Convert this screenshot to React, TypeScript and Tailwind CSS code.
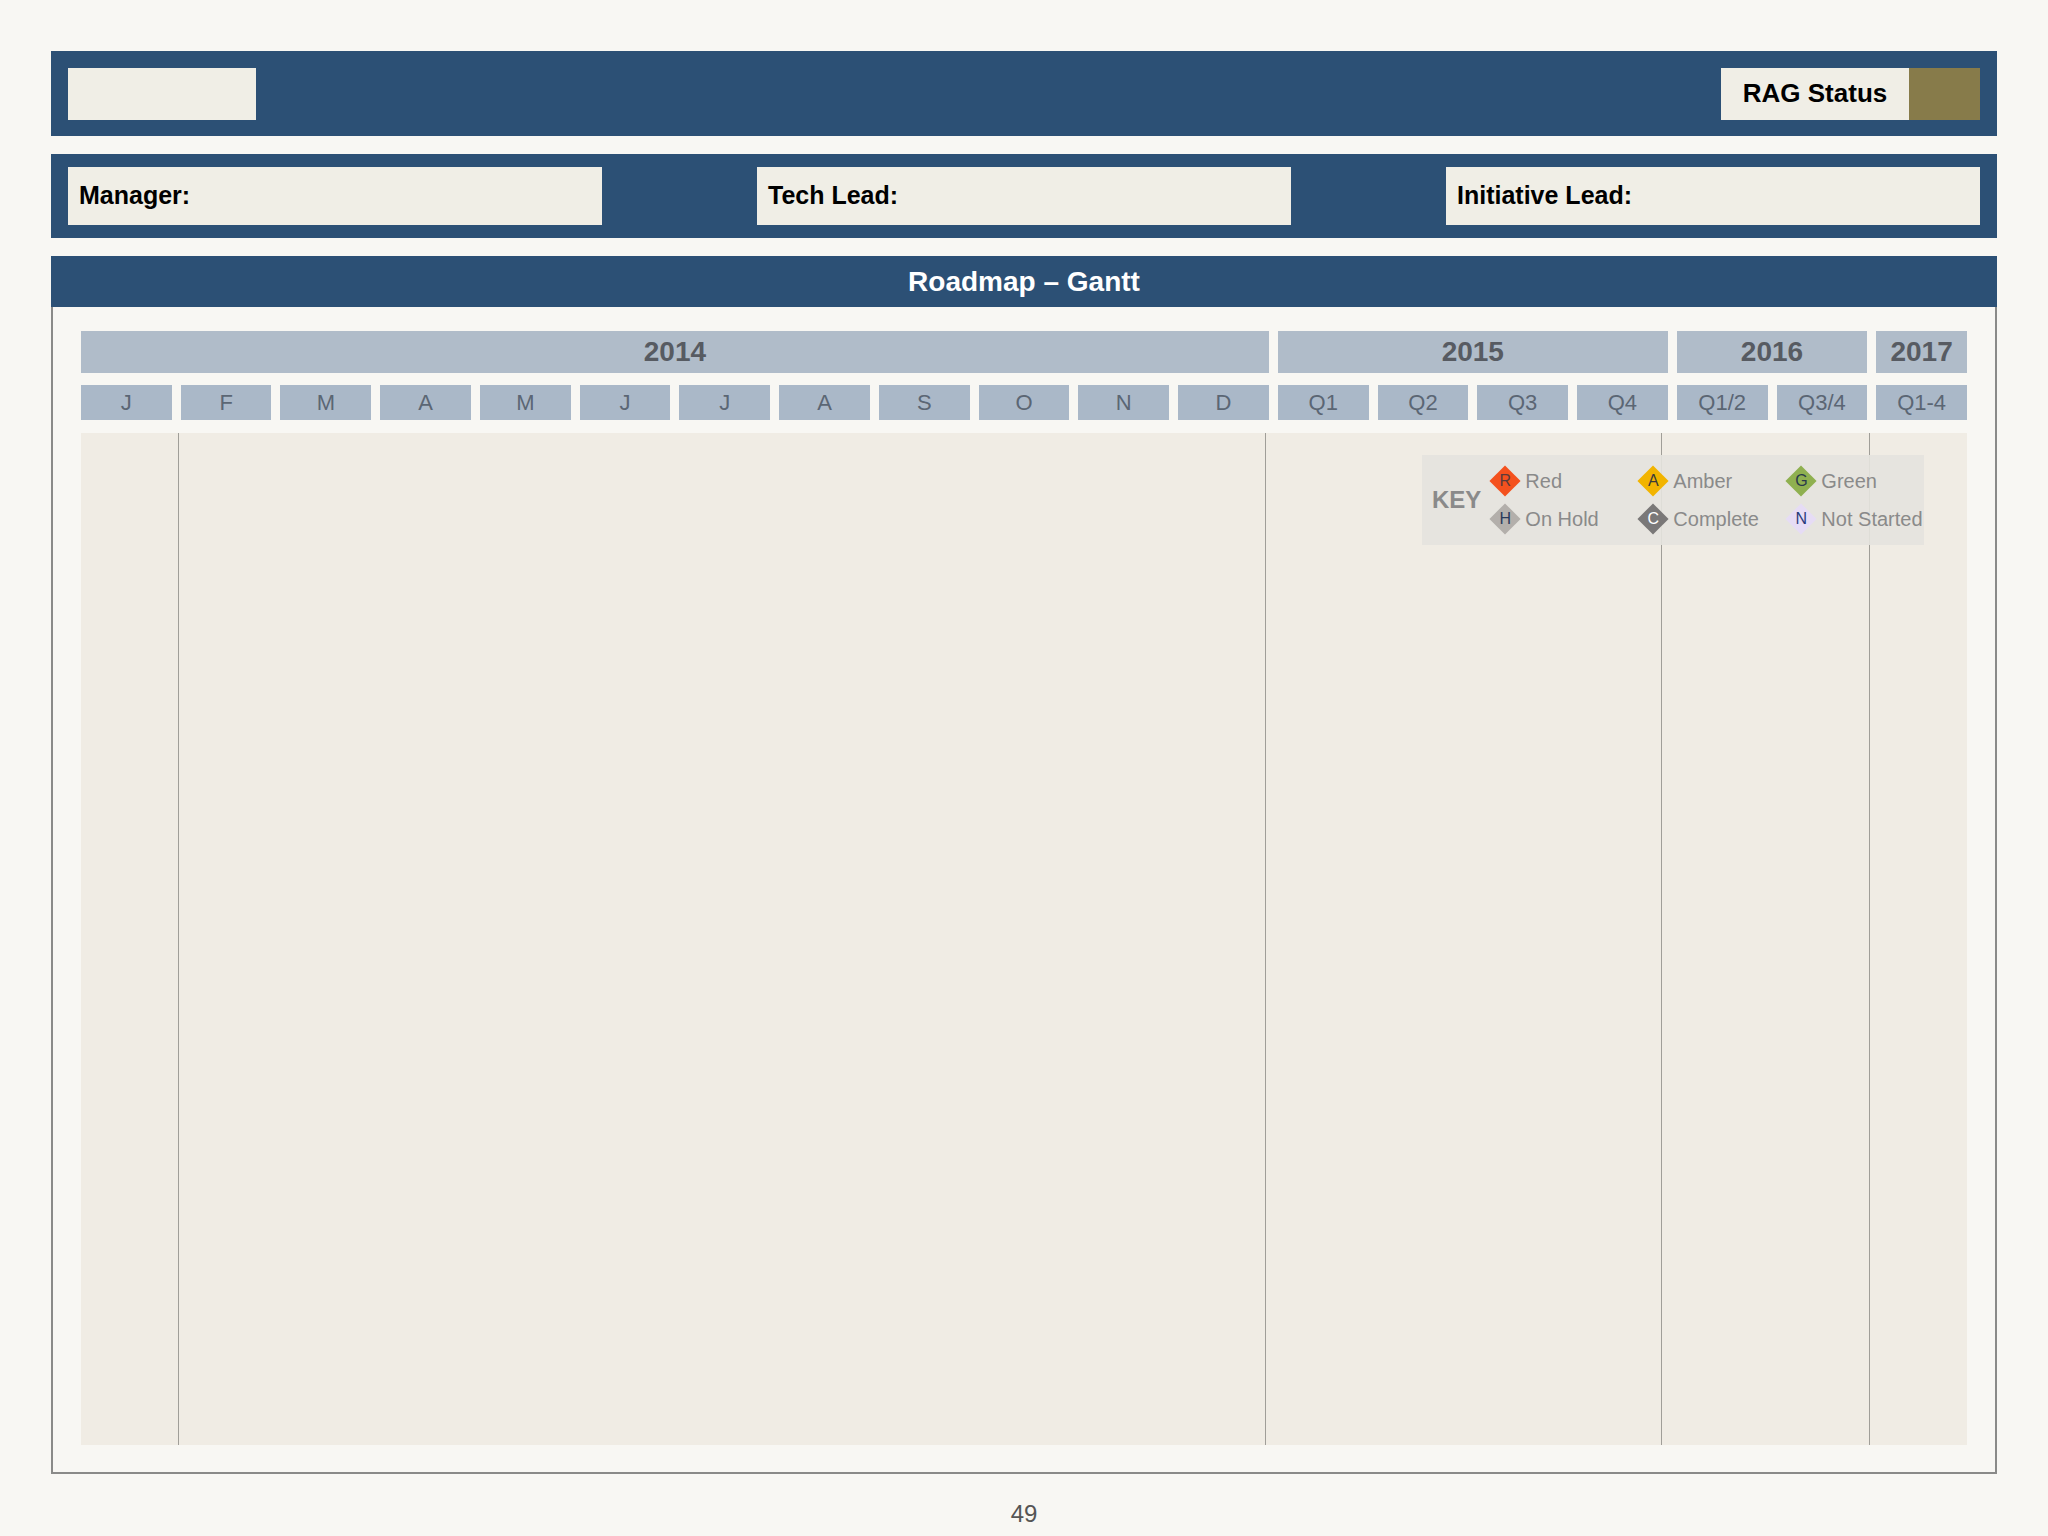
import React from "react";

const months = ["J","F","M","A","M","J","J","A","S","O","N","D","Q1","Q2","Q3","Q4","Q1/2","Q3/4","Q1-4"];
const years: [string, number][] = [["2014",12],["2015",4],["2016",2],["2017",1]];
const spanCls: Record<number,string> = {12:"col-span-12",4:"col-span-4",2:"col-span-2",1:"col-span-1"};

function Diamond({ bg, letter, fg }: { bg: string; letter: string; fg: string }) {
  return (
    <div className="relative w-[32px] h-[32px] flex items-center justify-center">
      <div className={`absolute w-[22px] h-[22px] rotate-45 ${bg}`} />
      <span className={`relative text-[16px] leading-none ${fg}`}>{letter}</span>
    </div>
  );
}

export default function App() {
  return (
    <div className="w-[2048px] h-[1536px] bg-[#f8f7f3] pt-[51px] px-[51px] flex flex-col" style={{ fontFamily: '"Liberation Sans", Arial, sans-serif' }}>
      <div className="h-[85px] bg-[#2c5075] flex items-center justify-between px-[17px]">
        <div className="w-[188px] h-[52px] bg-[#f0eee6]" />
        <div className="flex h-[52px]">
          <div className="w-[188px] bg-[#f0eee6] flex items-center justify-center text-[26px] font-bold text-black">RAG Status</div>
          <div className="w-[71px] bg-[#877b4a]" />
        </div>
      </div>
      <div className="mt-[18px] h-[84px] bg-[#2c5075] flex items-center justify-between px-[17px]">
        {["Manager:","Tech Lead:","Initiative Lead:"].map(t => (
          <div key={t} className="w-[534px] h-[58px] bg-[#f0eee6] flex items-center px-[11px] text-[25px] font-bold text-black">{t}</div>
        ))}
      </div>
      <div className="mt-[18px] h-[51px] bg-[#2c5075] flex items-center justify-center text-white font-bold text-[28px]">Roadmap – Gantt</div>
      <div className="h-[1167px] border-2 border-t-0 border-[#8a8a88] bg-[#f8f7f3] px-[28px] pt-[24px]">
        <div className="grid grid-cols-19 gap-x-[9px] gap-y-[12px]" style={{ gridTemplateColumns: "repeat(19, minmax(0, 1fr))" }}>
          {years.map(([y, s]) => (
            <div key={y} className={`${spanCls[s]} h-[42px] bg-[#b0bcc9] flex items-center justify-center text-[28px] font-bold text-[#575b62]`}>{y}</div>
          ))}
          {months.map((m, i) => (
            <div key={i} className="h-[35px] bg-[#aab8c8] flex items-center justify-center text-[22px] text-[#5b6674]">{m}</div>
          ))}
        </div>
        <div className="relative mt-[13px] h-[1012px] flex bg-[#f0ece4]">
          <div className="w-[97px]" />
          <div className="w-[1087px] border-l border-[#a09e98]" />
          <div className="w-[396px] border-l border-[#a09e98]" />
          <div className="w-[208px] border-l border-[#a09e98]" />
          <div className="flex-1 border-l border-[#a09e98]" />
          <div className="absolute left-[1341px] top-[22px] w-[502px] h-[90px] bg-[#e4e3de]/90 flex items-center pl-[10px]">
            <div className="text-[24px] font-bold text-[#8a8a8a] mr-[8px]">KEY</div>
            <div className="grid grid-cols-3 gap-y-[6px]" style={{ gridTemplateColumns: "148px 148px 150px" }}>
              {[
                ["bg-[#f4511e]","R","text-[#5a3a3a]","Red"],
                ["bg-[#f2b400]","A","text-[#3a3a3a]","Amber"],
                ["bg-[#8fb050]","G","text-[#2a3a4a]","Green"],
                ["bg-[#b3afab]","H","text-[#2a3a5a]","On Hold"],
                ["bg-[#7a7878]","C","text-white","Complete"],
                ["bg-[#e6dcf5]","N","text-[#2a3a7a]","Not Started"],
              ].map(([bg, l, fg, t]) => (
                <div key={t} className="flex items-center gap-[4px]">
                  <Diamond bg={bg} letter={l} fg={fg} />
                  <span className="text-[20px] text-[#8a8a8a] whitespace-nowrap">{t}</span>
                </div>
              ))}
            </div>
          </div>
        </div>
      </div>
      <div className="text-center text-[24px] text-[#555] mt-[22px]">49</div>
    </div>
  );
}
